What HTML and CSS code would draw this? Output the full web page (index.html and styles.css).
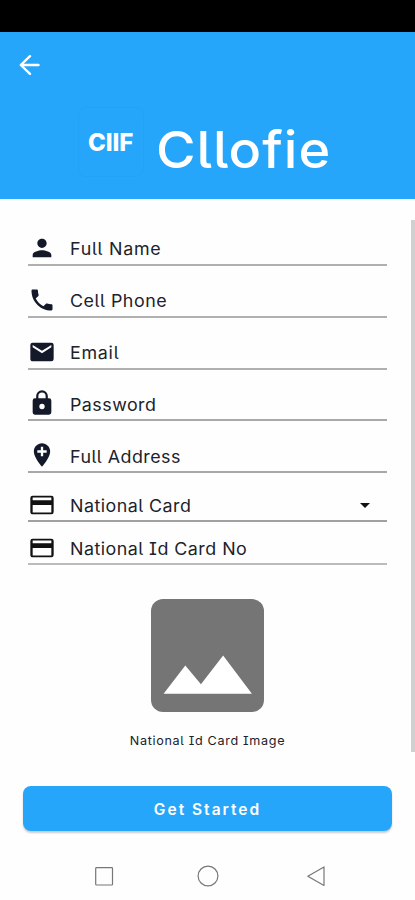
FILE: index.html
```html
<!DOCTYPE html>
<html lang="en">
<head>
<meta charset="utf-8">
<title>Cllofie</title>
<link rel="stylesheet" href="styles.css">
</head>
<body>
<div class="status"></div>
<header class="header">
  <svg class="back" viewBox="0 0 20 20"><path d="M10.500 1.200 1.300 10l9.200 8.800M1.800 10H19"/></svg>
  <div class="brand"><div class="logo"><span>CIIF</span></div><h1>Cllofie</h1></div>
</header>
<main class="main">
  <form class="form">
    <div class="field r1"><svg viewBox="0 0 24 24"><path d="M12 12c2.200 0 4-1.800 4-4s-1.800-4-4-4-4 1.800-4 4 1.800 4 4 4zm0 2c-2.700 0-8 1.300-8 4v2h16v-2c0-2.700-5.300-4-8-4z"/></svg><span>Full Name</span></div>
    <div class="field r2"><svg viewBox="0 0 24 24"><path d="M6.600 10.800c1.400 2.800 3.800 5.100 6.600 6.600l2.200-2.200c.3-.3.7-.4 1-.2 1.100.4 2.300.6 3.600.6.6 0 1 .4 1 1V20c0 .6-.4 1-1 1C10.600 21 3 13.400 3 4c0-.6.4-1 1-1h3.500c.6 0 1 .4 1 1 0 1.200.2 2.400.6 3.600.1.3 0 .7-.2 1z"/></svg><span>Cell Phone</span></div>
    <div class="field r3"><svg viewBox="0 0 24 24"><path d="M20 4H4a2 2 0 0 0-2 2v12c0 1.100.9 2 2 2h16a2 2 0 0 0 2-2V6a2 2 0 0 0-2-2zm0 4-8 5-8-5V6l8 5 8-5z"/></svg><span>Email</span></div>
    <div class="field r4"><svg viewBox="0 0 24 24"><path d="M18 8h-1V6A5 5 0 0 0 7 6v2H6a2 2 0 0 0-2 2v10c0 1.100.9 2 2 2h12a2 2 0 0 0 2-2V10a2 2 0 0 0-2-2zm-6 9.300a2.300 2.300 0 1 1 0-4.600 2.300 2.300 0 0 1 0 4.600zm3.100-9.300H8.900V6a3.100 3.100 0 0 1 6.200 0z"/></svg><span>Password</span></div>
    <div class="field r5"><svg viewBox="0 0 24 24"><path d="M12 2C8.140 2 5 5.140 5 9c0 5.250 7 13 7 13s7-7.750 7-13c0-3.860-3.140-7-7-7zm4 8h-3v3h-2v-3H8V8h3V5h2v3h3z"/></svg><span>Full Address</span></div>
    <div class="field r6"><svg viewBox="0 0 24 24"><path d="M20 4H4a2 2 0 0 0-2 2v12c0 1.100.9 2 2 2h16a2 2 0 0 0 2-2V6a2 2 0 0 0-2-2zm0 14.500H4V12h16zM20 8H4V5.500h16z"/></svg><span>National Card</span><i class="caret"></i></div>
    <div class="field r7"><svg viewBox="0 0 24 24"><path d="M20 4H4a2 2 0 0 0-2 2v12c0 1.100.9 2 2 2h16a2 2 0 0 0 2-2V6a2 2 0 0 0-2-2zm0 14.500H4V12h16zM20 8H4V5.500h16z"/></svg><span>National Id Card No</span></div>
  </form>
  <div class="scrollbar"></div>
</main>
<figure class="upload">
  <svg viewBox="0 0 112 112"><rect width="112" height="112" rx="12"/><path d="M12.500 94 34 66l15.500 18.500L71.500 56 100 94z"/></svg>
  <figcaption>National Id Card Image</figcaption>
</figure>
<button class="submit" type="button">Get Started</button>
<nav class="nav">
  <svg viewBox="0 0 22 22"><rect x="2.700" y="2.700" width="16.800" height="17.300" rx=".8"/></svg>
  <svg viewBox="0 0 22 22"><circle cx="11" cy="11" r="9.900"/></svg>
  <svg viewBox="0 0 22 22"><path d="M19 1.900v18.600L2.800 11.200z"/></svg>
</nav>
</body>
</html>
```
FILE: styles.css
```css
* { box-sizing: border-box; }
body {
  margin: 0;
  width: 415px;
  height: 900px;
  overflow: hidden;
  display: flex;
  flex-direction: column;
  background: #fefefe;
  color: #20222b;
  font-family: Inter, "Liberation Sans", sans-serif;
  font-feature-settings: "cv05", "cv08";
}
.status { height: 32px; background: #000; }
.header { height: 167px; padding: 23px 0 0 19px; background: #26a6fb; }
.back { display: block; width: 21px; height: 20px; fill: none; stroke: #fff; stroke-width: 2.400; stroke-linecap: round; stroke-linejoin: round; }
.brand { display: flex; margin: 32px 0 0 59px; }
.logo { width: 66px; height: 70px; border: 1px solid #24a2f6; border-radius: 8px; color: #fff; padding: 20px 0 0 9px; font: 800 24px/30px Inter, sans-serif; letter-spacing: -.1px; white-space: nowrap; }
h1 { margin: 7px 0 0 12px; color: #fff; font-size: 51px; line-height: 71px; font-weight: 500; letter-spacing: .9px; transform: scaleX(1.060); transform-origin: left; }
.main { display: flex; height: 367px; }
.form { width: 359px; margin-left: 28px; }
.field { display: flex; align-items: flex-end; border-bottom: 2px solid #b0b0b0; }
.field svg { width: 28px; height: 28px; fill: #14192a; margin-bottom: 2px; }
.field span { margin-left: 14px; font-size: 17px; line-height: 24px; margin-bottom: 3px; white-space: nowrap; letter-spacing: .5px; transform: scaleX(1.050); transform-origin: left; }
.r1 { height: 67px; }
.r2, .r3, .r4, .r5 { height: 51.750px; }
.r1 span, .r3 span { letter-spacing: .7px; }
.r4, .r5 { border-color: #a8a8a8; }
.r6 { height: 49px; border-color: #a0a0a0; }
.r7 { height: 43px; border-color: #bbb; }
.r4 span, .r5 span, .r6 span, .r7 span { margin-bottom: 2px; letter-spacing: .45px; }
.r6 svg, .r7 svg { fill: #111; margin-bottom: 1px; }
.caret { border: 5.500px solid transparent; border-top: 5.500px solid #111; border-bottom: 0; margin: 0 17px 12px auto; }
.scrollbar { width: 4px; height: 532px; margin: 21px 0 0 auto; background: #d0d0d0; flex: none; }
.upload { height: 220px; margin: 0; padding-top: 33px; text-align: center; }
.upload svg { display: block; width: 113px; height: 113px; margin: 0 auto; }
.upload rect { fill: #757575; }
.upload path { fill: #fff; }
figcaption { margin-top: 20px; font-size: 12px; line-height: 18px; letter-spacing: .65px; transform: scaleX(1.050); }
.submit { width: 369px; height: 45px; margin: 0 0 0 23px; padding: 3px 0 0; border: 0; border-radius: 8px; background: #26a6fb; box-shadow: 0 2px 2px #0003; color: #fff; font: 600 15.500px/20px Inter, sans-serif; letter-spacing: 2px; }
.nav { display: flex; justify-content: space-between; margin: 34px 88px 0 93px; }
.nav svg { width: 22px; height: 22px; fill: none; stroke: #777; stroke-width: 1.200; stroke-linejoin: round; }
.nav svg:nth-child(2) { margin-right: 4px; }
```
